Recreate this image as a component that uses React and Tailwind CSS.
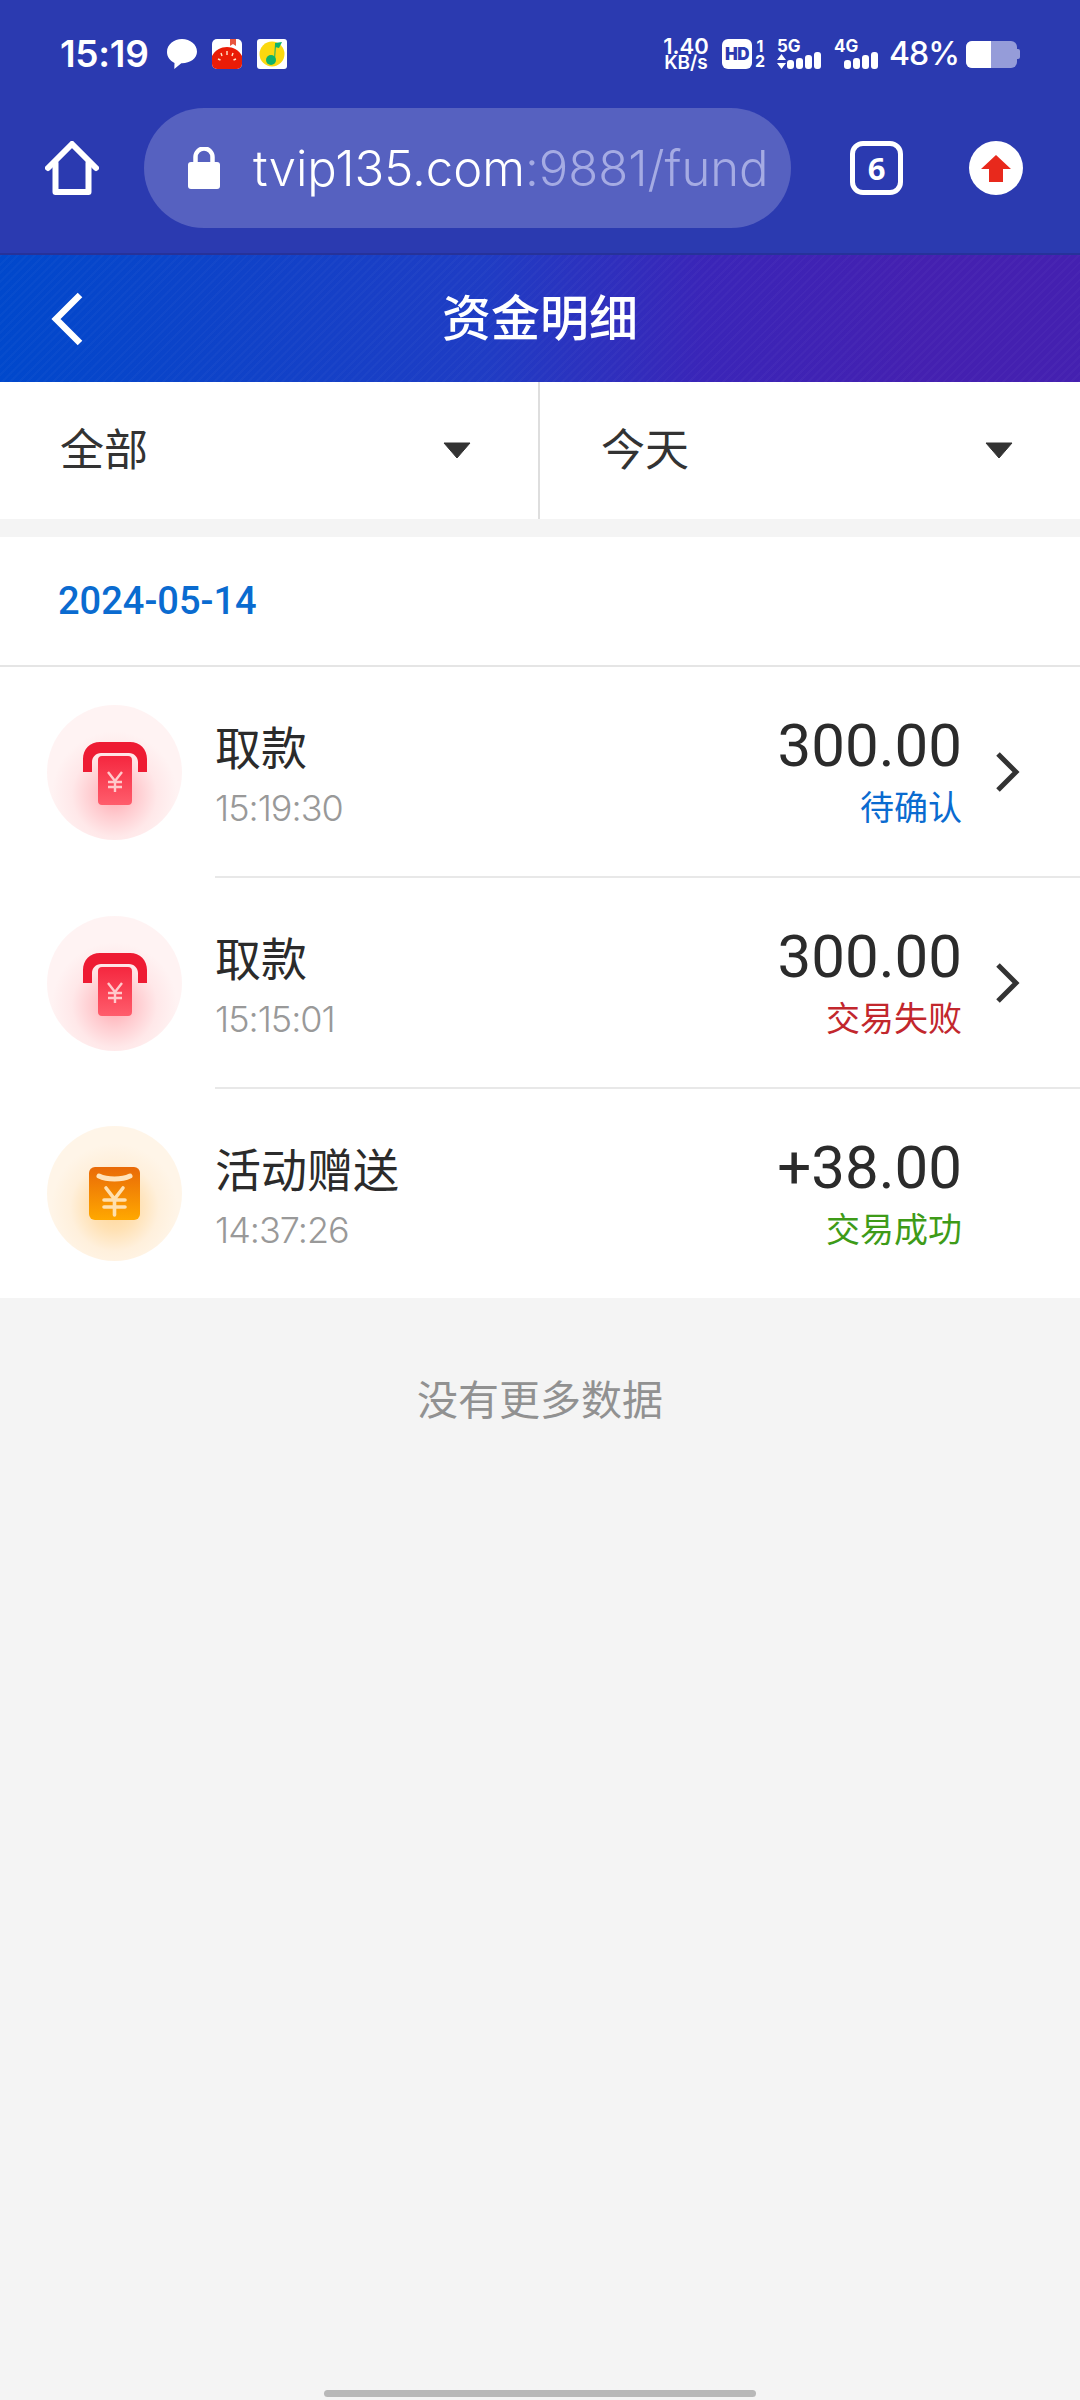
const font = "font-['Inter','Noto_Sans_CJK_SC',sans-serif]";

function Signal({ label, dual }) {
  return (
    <div className="relative w-[44px] h-[30px]">
      <span className="absolute left-0 top-0 text-[17px] font-bold leading-[15px] text-white">{label}</span>
      {dual && (
        <svg width="9" height="15" viewBox="0 0 9 15" className="absolute left-0 bottom-0">
          <path d="M4.500 0 9 6H0zM0 9h9l-4.500 6z" fill="#fff" />
        </svg>
      )}
      <div className="absolute bottom-0 right-0 flex items-end gap-[2px]">
        <i className="block w-[7px] h-[9px] rounded-[3px] bg-white" />
        <i className="block w-[7px] h-[11px] rounded-[3px] bg-white" />
        <i className="block w-[7px] h-[14px] rounded-[3px] bg-white" />
        <i className="block w-[7px] h-[17px] rounded-[3px] bg-white" />
      </div>
    </div>
  );
}

function StatusBar() {
  return (
    <div className="flex items-center h-[108px] pl-[60px] pr-[60px]">
      <span className="w-[91px] text-[37px] leading-[44px] font-semibold tracking-[-0.3px] text-white whitespace-nowrap">15:19</span>
      <svg width="30" height="30" viewBox="0 0 30 30" className="ml-[16px]">
        <path d="M15 0C6.700 0 0 5.600 0 13c0 4.800 3 8.700 7.500 10.900L7.300 30l7-5.800c.3 0 .5 0 .7 0 8.300 0 15-5 15-11.500C30 5.600 23.300 0 15 0z" fill="#fff" />
      </svg>
      <svg width="30" height="30" viewBox="0 0 30 30" className="ml-[15px]">
        <rect width="30" height="30" rx="5" fill="#fff" />
        <path d="M18 0h6v7l-3-2-3 2z" fill="#e8553f" />
        <path d="M0 25V17C3 11 9 8 15 8s12 3 15 9v8a5 5 0 0 1-5 5H5a5 5 0 0 1-5-5z" fill="#ea1c07" />
        <path d="M15 12v4M9 14l1 3M21 14l-1 3M6 20l2.500 1M24 20l-2.500 1" stroke="#ffe6c8" strokeWidth="1.400" />
      </svg>
      <svg width="30" height="30" viewBox="0 0 30 30" className="ml-[15px]">
        <rect width="30" height="30" rx="3" fill="#fff" />
        <circle cx="15" cy="15" r="12.500" fill="#fbd80f" />
        <circle cx="14" cy="21" r="5" fill="#0fb26b" />
        <path d="M17 21 18 5l1 .5 -1 15z" fill="#0fb26b" />
        <path d="M18 4l7-1-3 6-4-1z" fill="#0fb26b" />
      </svg>
      <div className="flex-1" />
      <div className="w-[46px] text-center text-white font-semibold text-[22px] leading-[18px]">
        1.40<br /><span className="block text-[19px] leading-[16px]">KB/s</span>
      </div>
      <div className="ml-[13px] flex items-center justify-center w-[30px] h-[30px] rounded-[6px] bg-white text-[#2b3ab0] text-[17px] font-black tracking-[-0.5px] leading-none">HD</div>
      <div className="ml-[3px] text-center text-white font-bold text-[16px] leading-[15px] w-[10px]">
        1<br />2
      </div>
      <div className="ml-[12px]"><Signal label="5G" dual /></div>
      <div className="ml-[13px]"><Signal label="4G" /></div>
      <span className="ml-[11px] w-[67px] text-[32px] leading-none font-medium tracking-[-1px] text-white whitespace-nowrap">48%</span>
      <div className="ml-[10px] flex items-center">
        <div className="flex w-[51px] h-[27px] rounded-[6px] overflow-hidden bg-[#959cd9]">
          <div className="w-[25px] bg-white" />
        </div>
        <div className="w-[3px] h-[10px] rounded-r-[2px] bg-[#959cd9]" />
      </div>
    </div>
  );
}

function BrowserBar() {
  return (
    <div className="flex items-start pl-[45px]">
      <svg width="54" height="54" viewBox="0 0 54 54" className="mt-[33px] shrink-0" fill="none" stroke="#fff" strokeWidth="6" strokeLinecap="round" strokeLinejoin="round">
        <path d="M3 27 27 3l24 24" />
        <path d="M10.500 22v29h33V22" />
      </svg>
      <div className="ml-[45px] flex items-center shrink-0 w-[647px] h-[120px] rounded-full bg-[#5661c0] pl-[44px] overflow-hidden">
        <svg width="32" height="42" viewBox="0 0 32 42" className="shrink-0">
          <path d="M7.500 17v-7a8.500 8.500 0 0 1 17 0v7" fill="none" stroke="#fff" strokeWidth="4.500" />
          <rect x="0" y="15" width="32" height="27" rx="3" fill="#fff" />
        </svg>
        <span className="ml-[33px] text-[49px] leading-none font-light text-white whitespace-nowrap">
          tvip135.com<span className="text-[#a5abe3]">:9881/fund</span>
        </span>
      </div>
      <div className="ml-[59px] mt-[33px] flex items-center justify-center shrink-0 w-[53px] h-[54px] rounded-[13px] border-[5px] border-white">
        <span className="text-[31px] leading-none font-bold text-white font-['Open_Sans']">6</span>
      </div>
      <div className="ml-[66px] mt-[33px] flex items-center justify-center shrink-0 w-[54px] h-[54px] rounded-full bg-white">
        <svg width="30" height="27" viewBox="0 0 30 27"><path d="M15 0 30 14H22V27H8V14H0z" fill="#e8291c" /></svg>
      </div>
    </div>
  );
}

function Caret() {
  return (
    <svg width="28" height="17" viewBox="0 0 28 17"><path d="M1 1h26L14 16z" fill="#333" stroke="#333" strokeLinejoin="round" /></svg>
  );
}

function WithdrawIcon({ id }) {
  return (
    <div className="flex items-center justify-center shrink-0 w-[135px] h-[135px] rounded-full bg-[radial-gradient(circle_at_50%_66%,#ffa9b0_0%,#ffccd0_20%,#ffe8e9_38%,#fff3f3_56%,#fff3f3_100%)]">
      <svg width="64" height="64" viewBox="0 0 64 64">
        <defs>
          <linearGradient id={id} x1="0" y1="0" x2="0" y2="1">
            <stop offset="0" stopColor="#f5273f" />
            <stop offset="1" stopColor="#ff5d6c" />
          </linearGradient>
        </defs>
        <path d="M0 31V18C0 8 7 1 17 1h30c10 0 17 7 17 17v13H55V21c0-5-4-9-9-9H18c-5 0-9 4-9 9v10z" fill="#ee1b33" />
        <path d="M19 15h26c2.500 0 4 1.500 4 4v41c0 2.500-1.500 4-4 4H19c-2.500 0-4-1.500-4-4V19c0-2.500 1.500-4 4-4z" fill={"url(#" + id + ")"} />
        <path d="M25 31l7 9 7-9M32 40v11M25 41h14M25 46h14" fill="none" stroke="#ffc9cb" strokeWidth="2.400" />
      </svg>
    </div>
  );
}

function BonusIcon() {
  return (
    <div className="flex items-center justify-center shrink-0 w-[135px] h-[135px] rounded-full bg-[radial-gradient(circle_at_50%_60%,#ffd596_0%,#ffe1b4_22%,#fff0dc_42%,#fff5e8_60%,#fff5e8_100%)]">
      <svg width="51" height="53" viewBox="0 0 51 53">
        <defs>
          <linearGradient id="bonus" x1="0" y1="0" x2="0" y2="1">
            <stop offset="0" stopColor="#e96a08" />
            <stop offset="1" stopColor="#ffa800" />
          </linearGradient>
        </defs>
        <rect width="51" height="53" rx="6" fill="url(#bonus)" />
        <path d="M10 9c8 4 23 4 31 0" fill="none" stroke="#ffe3bb" strokeWidth="5" strokeLinecap="round" />
        <path d="M17 21l8.500 11 8.500-11M25.500 32v16M15 33h21M15 40h21" fill="none" stroke="#ffe0ae" strokeWidth="3.600" strokeLinecap="round" />
      </svg>
    </div>
  );
}

function Chevron() {
  return (
    <svg width="24" height="40" viewBox="0 0 24 40" fill="none" stroke="#333" strokeWidth="5">
      <path d="M2 2l18 18L2 38" />
    </svg>
  );
}

const rows = [
  { name: "取款", time: "15:19:30", amount: "300.00", status: "待确认", color: "text-[#0a6bd0]", arrow: true },
  { name: "取款", time: "15:15:01", amount: "300.00", status: "交易失败", color: "text-[#c2272d]", arrow: true },
  { name: "活动赠送", time: "14:37:26", amount: "+38.00", status: "交易成功", color: "text-[#3e9b18]", bonus: true },
];

function Row({ row, index, last }) {
  return (
    <div className={"flex items-center pl-[47px] " + (last ? "h-[209px]" : "h-[211px]")}>
      {row.bonus ? <BonusIcon /> : <WithdrawIcon id={"card" + index} />}
      <div className={"ml-[33px] flex-1 flex items-center h-full " + (last ? "" : "border-b-2 border-[#e8e8e8]")}>
        <div className="flex-1 flex flex-col pt-[12px]">
          <span className="text-[46px] leading-[60px] text-[#2b2b2b]">{row.name}</span>
          <span className="text-[36px] leading-[60px] font-light tracking-[-1px] text-[#999]">{row.time}</span>
        </div>
        <div className="flex flex-col items-end pt-[10px]">
          <span className="text-[60px] leading-[62px] font-['Roboto','Noto_Sans_CJK_SC',sans-serif] text-[#2b2b2b]">{row.amount}</span>
          <span className={"text-[34px] leading-[62px] " + row.color}>{row.status}</span>
        </div>
        <div className="ml-[34px] mr-[60px] w-[24px]">{row.arrow && <Chevron />}</div>
      </div>
    </div>
  );
}

export default function App() {
  return (
    <div className={"relative flex flex-col w-[1080px] h-[2400px] bg-[#f4f4f4] overflow-hidden " + font}>
      <div className="bg-[#2b3ab0] h-[255px] border-b-2 border-[#26329a]">
        <StatusBar />
        <BrowserBar />
      </div>
      <div className="flex items-center justify-center relative h-[127px] bg-[repeating-linear-gradient(135deg,rgba(255,255,255,0.025)_0_2px,transparent_2px_6px),linear-gradient(90deg,#0048cc_0%,#1f3cc4_45%,#3a25b8_65%,#4420b0_85%,#4420b0_100%)]">
        <svg width="34" height="54" viewBox="0 0 34 54" className="absolute left-[50px]" fill="none" stroke="#fff" strokeWidth="6.500">
          <path d="M30 3 6 27l24 24" />
        </svg>
        <span className="text-[49px] font-medium text-white">资金明细</span>
      </div>
      <div className="flex h-[137px] bg-white">
        <div className="w-[540px] flex items-center justify-between pl-[60px] pr-[67px] border-r-2 border-[#dedede]">
          <span className="text-[44px] leading-[60px] mb-[2px] text-[#333]">全部</span>
          <Caret />
        </div>
        <div className="w-[540px] flex items-center justify-between pl-[61px] pr-[67px]">
          <span className="text-[44px] leading-[60px] mb-[2px] text-[#333]">今天</span>
          <Caret />
        </div>
      </div>
      <div className="mt-[18px] bg-white">
        <div className="flex items-center h-[130px] pl-[58px] border-b-2 border-[#e5e5e5]">
          <span className="text-[38px] font-medium font-['Roboto',sans-serif] text-[#0a6bd0]">2024-05-14</span>
        </div>
        {rows.map((r, i) => (
          <Row key={i} row={r} index={i} last={i === rows.length - 1} />
        ))}
      </div>
      <div className="mt-[72px] text-center text-[41px] text-[#919191]">没有更多数据</div>
      <div className="absolute bottom-[3px] left-[324px] w-[432px] h-[7px] rounded-full bg-[#b8b8b8]" />
    </div>
  );
}
